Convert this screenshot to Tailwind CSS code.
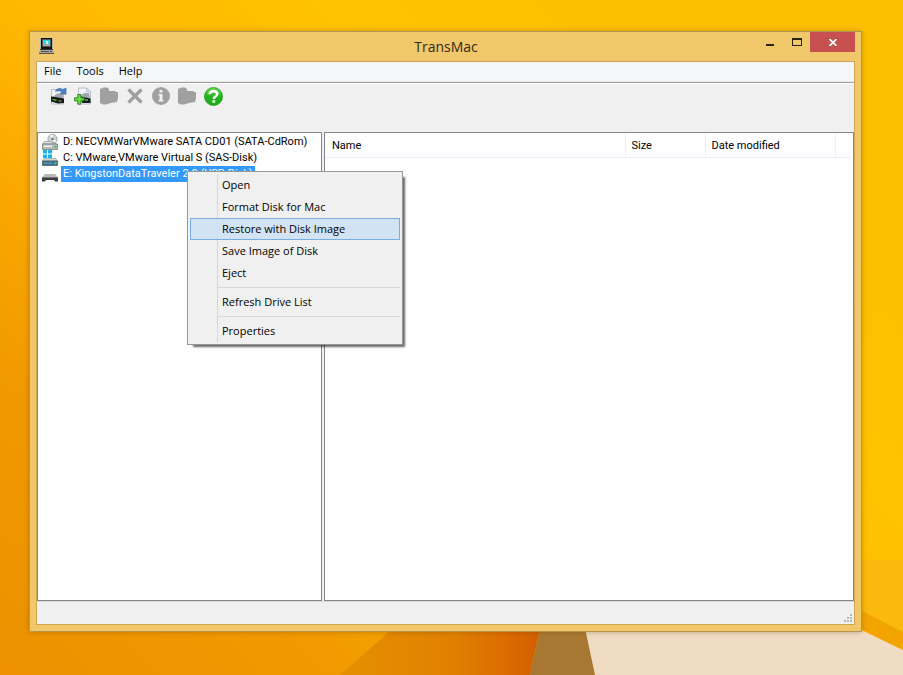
<!DOCTYPE html>
<html lang="en">
<head>
    <meta charset="UTF-8">
    <meta name="viewport" content="width=device-width, initial-scale=1.0">
    <script src="https://cdn.jsdelivr.net/npm/@tailwindcss/browser@4"></script>
    <title>TransMac</title>
</head>
<body class="relative h-screen overflow-hidden bg-[#fdb600] font-['Open_Sans','Noto_Sans',sans-serif] text-[11px] text-black">
    <!-- wallpaper -->
    <svg class="absolute inset-0 -z-10 h-full w-full" viewBox="0 0 903 675" preserveAspectRatio="none" aria-hidden="true">
        <defs>
            <linearGradient id="sky" gradientUnits="userSpaceOnUse" x1="0" y1="675" x2="600" y2="0">
                <stop offset="0" stop-color="#ed9100"/>
                <stop offset=".25" stop-color="#f19900"/>
                <stop offset=".45" stop-color="#fcac00"/>
                <stop offset=".56" stop-color="#ffb800"/>
                <stop offset=".8" stop-color="#ffc300"/>
                <stop offset="1" stop-color="#fdc000"/>
            </linearGradient>
            <linearGradient id="fold" x1="0" y1="0" x2="1" y2="0">
                <stop offset="0" stop-color="#e69000"/>
                <stop offset=".55" stop-color="#e08000"/>
                <stop offset=".8" stop-color="#dc6c00"/>
                <stop offset="1" stop-color="#cf5c00"/>
            </linearGradient>
        </defs>
        <path fill="url(#sky)" d="M0 0h903v675H0z"/>
        <path fill="url(#fold)" d="M340 675l85-75h121l-16 75z"/>
        <path fill="#a87832" d="M530 675l16-75h34l16 75z"/>
        <path fill="#f0dcc2" d="M595 675l-16-75h220l104 50v25z"/>
        <path fill="#f3a400" d="M850 600l53 31v19l-53-26z"/>
        <path fill="#fab90c" d="M850 560h53v72l-53-27z"/>
    </svg>

    <div class="h-full pt-[31px] pr-[41px] pb-[43px] pl-[29px]">
        <div class="flex h-full flex-col border border-[#b79650] bg-[#f0c869] px-1.5 pb-1.5 shadow-[0_0_5px_rgba(90,60,0,.35)]">
            <header class="flex h-[29px] shrink-0 items-start">
                <svg class="mt-[5px] ml-0.5 h-[18px] w-[18px] shrink-0" viewBox="0 0 18 18" shape-rendering="crispEdges" aria-hidden="true">
                    <path fill="#b8b4a8" d="M2 1h13v11H2z"/>
                    <path fill="#111" d="M3 1h11v11H3z"/>
                    <path fill="#55544f" d="M4 2h9v8H4z"/>
                    <path fill="#a9a9a3" d="M5 3h7v6H5z"/>
                    <path fill="#2bd8e0" d="M6 3h5v4H6z"/>
                    <path fill="#d9fbff" d="M8 4h2v3H8z"/>
                    <path fill="#333" d="M2 12h13v1H2z"/>
                    <path fill="#aaa69d" d="M2 13h13v1h1v3H1v-3h1z"/>
                    <path fill="#55524c" d="M3 14h8v1H3zM1 16h15v1H1zM12 14h2v1h-2z"/>
                </svg>
                <h1 class="flex-1 pt-1 pl-20 text-center text-sm leading-[22px] text-[#33291a]">TransMac</h1>
                <button aria-label="Minimize" class="grid h-5 w-[27px] place-items-center">
                    <span class="mt-1.5 h-0.5 w-2 bg-[#2b2419]"></span>
                </button>
                <button aria-label="Maximize" class="grid h-5 w-[27px] place-items-center">
                    <span class="h-2 w-2.5 border border-t-2 border-[#2b2419]"></span>
                </button>
                <button aria-label="Close" class="grid h-5 w-[45px] place-items-center bg-[#c75050]">
                    <svg class="h-[7px] w-2" viewBox="0 0 8 7" fill="none" stroke="#fff" stroke-width="1.7" aria-hidden="true"><path d="M.5 0l7 7M7.5 0l-7 7"/></svg>
                </button>
            </header>

            <main class="flex min-h-0 flex-1 flex-col border border-[#cfa654] bg-[#f0f0f0]">
                <nav class="flex h-5 shrink-0 items-center gap-[15px] border-b border-[#e8e8ec] bg-[#f5f6f8] px-[7px]">
                    <button>File</button>
                    <button>Tools</button>
                    <button>Help</button>
                </nav>

                <div class="flex h-[50px] shrink-0 items-start gap-1.5 border-t border-[#a0a0a0] pt-[3px] pl-3 shadow-[inset_0_1px_0_#fff]">
                    <button aria-label="Open disk image" class="grid h-5 w-[18px] place-items-center">
                        <svg class="h-[18px] w-[18px]" viewBox="0 0 18 18" aria-hidden="true">
                            <path fill="#f1f4fa" stroke="#a9b3c4" stroke-width=".8" d="M2.500 2.500h8l4 4v10.500h-12z"/>
                            <path fill="#a3a8b0" d="M3 10.500L8 6.500h6v5z"/>
                            <path fill="#16181a" d="M2 9.500l4 .5 9 1.500v4.500l-6 .5-7-2z"/>
                            <path fill="#5ad138" d="M3.500 11.700l4 1v1.300l-4-1z"/>
                            <path fill="#c9b02c" d="M9.500 13.500h3v1h-3z"/>
                            <path fill="#4a84cd" stroke="#27569b" stroke-width=".6" d="M6.500 4.500C7.500 1.500 11 .5 13.700 2.500L17 1.200v6l-5.700-.6 1.600-1.600C11 3.400 8.500 3.300 6.500 4.500z"/>
                        </svg>
                    </button>
                    <button aria-label="New disk image" class="grid h-5 w-5 place-items-center">
                        <svg class="h-[18px] w-[18px]" viewBox="0 0 18 18" aria-hidden="true">
                            <path fill="#f1f4fa" stroke="#a9b3c4" stroke-width=".8" d="M4.500 1h8l4 4v12h-12z"/>
                            <path fill="#dde4ef" stroke="#a9b3c4" stroke-width=".6" d="M12.500 1v4h4z"/>
                            <path fill="#a3a8b0" d="M6 9.500l4-3.500h5l1 5.500z"/>
                            <path fill="#16181a" d="M7 9.500l9.500 2V16H8z"/>
                            <path fill="#5ad138" d="M11 12l3 .6v1.200l-3-.4z"/>
                            <path fill="#6bdc48" stroke="#217d13" stroke-width=".9" d="M3.800 7.500h3v3.300h3.300v3H6.800v3.400h-3v-3.400H.6v-3h3.200z"/>
                        </svg>
                    </button>
                    <button aria-label="Open folder" class="grid h-5 w-5 place-items-center" disabled>
                        <svg class="h-[18px] w-5" viewBox="0 0 20 18" fill="#a0a0a0" aria-hidden="true"><path d="M1 1.500h2L4 .5h4l2 1.500v2h6l1 1h2v6l-1 4-6 1-5 1.500H4L1 16z"/></svg>
                    </button>
                    <button aria-label="Delete" class="grid h-5 w-5 place-items-center" disabled>
                        <svg class="h-4 w-4" viewBox="0 0 16 16" fill="none" stroke="#a0a0a0" stroke-width="3.400" aria-hidden="true"><path d="M1.500 1.500l13 13M14.500 1.500l-13 13"/></svg>
                    </button>
                    <button aria-label="Information" class="grid h-5 w-5 place-items-center" disabled>
                        <svg class="h-[18px] w-[18px]" viewBox="0 0 18 18" aria-hidden="true">
                            <circle cx="9" cy="9" r="9" fill="#a0a0a0"/>
                            <path fill="#f0f0f0" d="M7.500 3h3v2.500h-3zM6.500 7h4v6h1v1.500h-5V13h1V8.500h-1z"/>
                        </svg>
                    </button>
                    <button aria-label="Folder" class="grid h-5 w-5 place-items-center" disabled>
                        <svg class="h-[18px] w-5" viewBox="0 0 20 18" fill="#a0a0a0" aria-hidden="true"><path d="M1 1.500h2L4 .5h4l2 1.500v2h6l1 1h2v6l-1 4-6 1-5 1.500H4L1 16z"/></svg>
                    </button>
                    <button aria-label="Help topics" class="grid h-5 w-5 place-items-center">
                        <svg class="h-[19px] w-[19px]" viewBox="0 0 19 19" aria-hidden="true">
                            <defs>
                                <linearGradient id="help" x1="0" y1="0" x2="0" y2="1">
                                    <stop offset="0" stop-color="#6fdc52"/>
                                    <stop offset=".5" stop-color="#23b41d"/>
                                    <stop offset="1" stop-color="#1cae17"/>
                                </linearGradient>
                            </defs>
                            <circle cx="9.500" cy="9.500" r="9" fill="url(#help)" stroke="#189614" stroke-width=".8"/>
                            <path fill="none" stroke="#fff" stroke-width="2.600" d="M5.700 7.300C5.700 3.300 13.300 3.300 13.300 7c0 2.300-3.500 2.200-3.500 5"/>
                            <path fill="#fff" d="M8.400 13.200h2.800v2.500H8.400z"/>
                        </svg>
                    </button>
                </div>

                <div class="flex min-h-0 flex-1 gap-0.5 font-[Roboto,'Liberation_Sans',sans-serif]">
                    <ul class="w-[285px] shrink-0 border border-[#828790] bg-white pt-px pl-1 leading-4 whitespace-nowrap">
                        <li class="flex h-4 gap-[3px]">
                            <svg class="h-4 w-4" viewBox="0 0 16 16" aria-hidden="true">
                                <circle cx="10.500" cy="5" r="4.600" fill="#d3d6d6" stroke="#8f9494" stroke-width=".8"/>
                                <path fill="#fff" d="M10.500 5L8 1.500l3-.8zM10.500 5l3.500 2-1 1.500z"/>
                                <circle cx="10.500" cy="5" r="1.300" fill="#777"/>
                                <path fill="#dfe1e1" stroke="#8c8f8f" stroke-width=".7" d="M2.500 7.500h6l6 2.500H.7z"/>
                                <path fill="#b4b8b8" stroke="#6f7373" stroke-width=".7" d="M.5 10h15v5.500H.5z"/>
                                <path fill="#f7f7f7" d="M2 11.500h8V13H2z"/>
                                <path fill="#3ec22c" d="M12.500 12h2v1.500h-2z"/>
                            </svg>
                            <span class="px-0.5">D: NECVMWarVMware SATA CD01 (SATA-CdRom)</span>
                        </li>
                        <li class="flex h-4 gap-[3px]">
                            <svg class="h-4 w-4" viewBox="0 0 16 16" aria-hidden="true">
                                <path fill="#16b5ea" d="M1 0h4v3.500H1zM6 0h4v3.500H6zM1 4.500h4V8H1zM6 4.500h4V8H6z"/>
                                <path fill="#cfd4d6" stroke="#8c9294" stroke-width=".6" d="M2.500 8.500h11l2 2.500H.5z"/>
                                <path fill="#3d7695" stroke="#46525a" stroke-width=".7" d="M.5 11h15v4.500H.5z"/>
                                <path fill="#5d9dbd" d="M2 12.500h8v1H2z"/>
                                <path fill="#5ee04a" d="M12.500 12.500h2V14h-2z"/>
                            </svg>
                            <span class="px-0.5">C: VMware,VMware Virtual S (SAS-Disk)</span>
                        </li>
                        <li class="flex h-4 gap-[3px]">
                            <svg class="h-4 w-4" viewBox="0 0 16 16" aria-hidden="true">
                                <path fill="#b9b9b9" d="M3 8h10l3 3.500H0z"/>
                                <path fill="#3d3d3d" d="M0 11h16v4.500h-3L12 14H4l-1 1.500H0z"/>
                                <path fill="#777" d="M0 11h16v1H0z"/>
                            </svg>
                            <span class="bg-[#3399ff] px-0.5 text-white">E: KingstonDataTraveler 2.0 (USB-Disk)</span>
                        </li>
                    </ul>

                    <div class="min-w-0 flex-1 border border-[#828790] bg-white pr-0.5">
                        <table class="w-full table-fixed border-b border-[#e8f1fb] text-left">
                            <thead>
                                <tr class="h-6">
                                    <th class="border-r border-[#e8f1fb] pt-0.5 pl-[7px] font-normal">Name</th>
                                    <th class="w-20 border-r border-[#e8f1fb] pt-0.5 pl-1.5 font-normal">Size</th>
                                    <th class="w-[130px] border-r border-[#e8f1fb] pt-0.5 pl-1.5 font-normal">Date modified</th>
                                    <td class="w-4"></td>
                                </tr>
                            </thead>
                        </table>
                    </div>
                </div>

                <footer class="flex h-[23px] shrink-0 items-end justify-end border-t border-[#d7d7d7] p-0.5">
                    <svg class="h-2 w-2" viewBox="0 0 8 8" fill="#b8b8b8" shape-rendering="crispEdges" aria-hidden="true"><path d="M6 0h2v2H6zM3 3h2v2H3zM6 3h2v2H6zM0 6h2v2H0zM3 6h2v2H3zM6 6h2v2H6z"/></svg>
                </footer>
            </main>
        </div>
    </div>

    <!-- drive context menu -->
    <div role="menu" class="absolute top-[171px] left-[187px] flex w-[216px] flex-col border border-[#979797] bg-[#f0f0f0] p-0.5 shadow-[4px_4px_2px_-2px_rgba(0,0,0,.6)]">
        <div class="absolute inset-y-0.5 left-[29px] w-px bg-[#d7d7d7]"></div>
        <button role="menuitem" class="h-[22px] pl-8 text-left">Open</button>
        <button role="menuitem" class="h-[22px] pl-8 text-left">Format Disk for Mac</button>
        <button role="menuitem" class="relative h-[22px] border border-[#78aee5] bg-[#cce1f4]/85 pl-[31px] text-left">Restore with Disk Image</button>
        <button role="menuitem" class="h-[22px] pl-8 text-left">Save Image of Disk</button>
        <button role="menuitem" class="h-[22px] pl-8 text-left">Eject</button>
        <hr class="my-[3px] ml-7 border-[#d7d7d7]">
        <button role="menuitem" class="h-[22px] pl-8 text-left">Refresh Drive List</button>
        <hr class="my-[3px] ml-7 border-[#d7d7d7]">
        <button role="menuitem" class="h-[22px] pl-8 text-left">Properties</button>
    </div>
</body>
</html>
